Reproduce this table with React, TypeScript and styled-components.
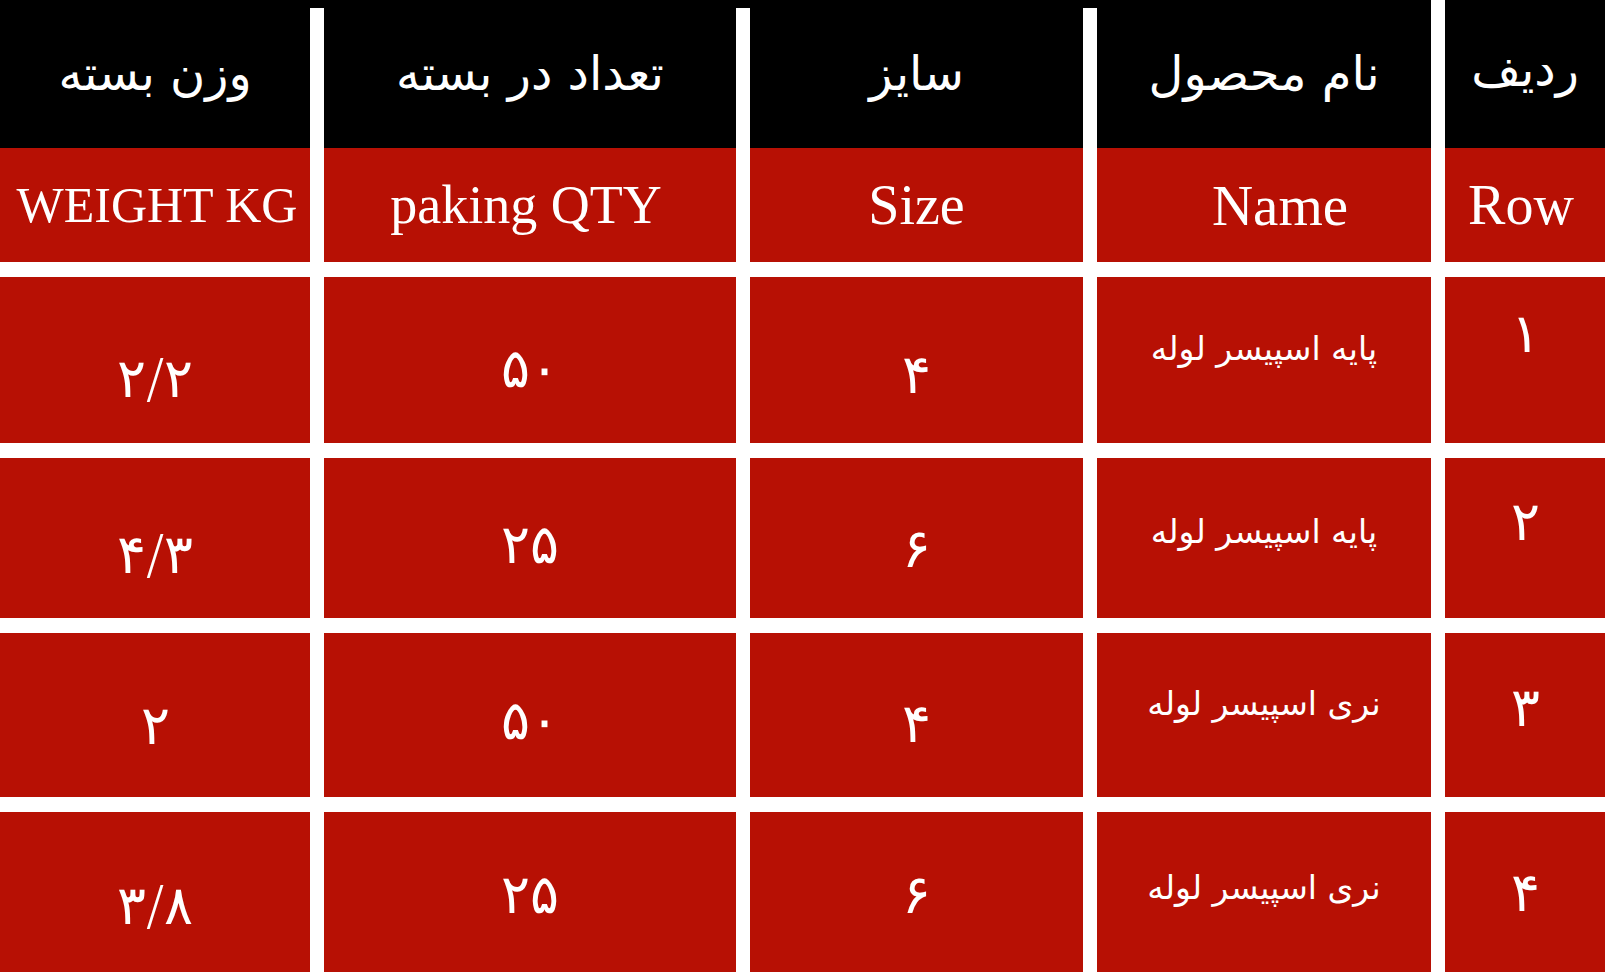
import React from "react";
import styled, { createGlobalStyle } from "styled-components";

const GlobalStyle = createGlobalStyle`
  html, body {
    margin: 0;
    padding: 0;
    background: #ffffff;
  }
  body {
    font-family: "Liberation Serif", "DejaVu Sans", serif;
  }
`;

const RED = "#b71004";

type Head = { fa: string; en: string; enSize: number; nudge: number };

// columns run right to left: Row, Name, Size, QTY, Weight
const heads: Head[] = [
  { fa: "ردیف", en: "Row", enSize: 56, nudge: -4 },
  { fa: "نام محصول", en: "Name", enSize: 57, nudge: 16 },
  { fa: "سایز", en: "Size", enSize: 56, nudge: 0 },
  { fa: "تعداد در بسته", en: "paking QTY", enSize: 54, nudge: -4 },
  { fa: "وزن بسته", en: "WEIGHT KG", enSize: 50, nudge: 2 },
];

type Cell = { text: string; shift: number };
type BodyRow = { height: number; cells: Cell[] };

const rows: BodyRow[] = [
  {
    height: 166,
    cells: [
      { text: "۱", shift: -27 },
      { text: "پایه اسپیسر لوله", shift: -12 },
      { text: "۴", shift: 14 },
      { text: "۵۰", shift: 8 },
      { text: "۲/۲", shift: 18 },
    ],
  },
  {
    height: 160,
    cells: [
      { text: "۲", shift: -17 },
      { text: "پایه اسپیسر لوله", shift: -7 },
      { text: "۶", shift: 10 },
      { text: "۲۵", shift: 6 },
      { text: "۴/۳", shift: 16 },
    ],
  },
  {
    height: 164,
    cells: [
      { text: "۳", shift: -8 },
      { text: "نری اسپیسر لوله", shift: -12 },
      { text: "۴", shift: 8 },
      { text: "۵۰", shift: 5 },
      { text: "۲", shift: 10 },
    ],
  },
  {
    height: 160,
    cells: [
      { text: "۴", shift: 0 },
      { text: "نری اسپیسر لوله", shift: -5 },
      { text: "۶", shift: 2 },
      { text: "۲۵", shift: 2 },
      { text: "۳/۸", shift: 13 },
    ],
  },
];

const Sheet = styled.div`
  direction: rtl;
  width: 1605px;
  display: flex;
  flex-direction: column;
  gap: 15px;
  background: #ffffff;
`;

const Columns = styled.div<{ $rows: string }>`
  display: grid;
  grid-template-columns: 160px 334px 333px 412px 310px;
  grid-template-rows: ${(p) => p.$rows};
  column-gap: 14px;
`;

const Cap = styled.div`
  grid-column: 2 / -1;
  grid-row: 1;
  background: #000000;
`;

const HeadCell = styled.div<{ $first: boolean }>`
  grid-row: ${(p) => (p.$first ? "1 / -1" : "2 / -1")};
  display: flex;
  flex-direction: column;
`;

const FaLabel = styled.div`
  flex: 1;
  background: #000000;
  color: #ffffff;
  display: flex;
  align-items: center;
  justify-content: center;
  font-family: "DejaVu Sans", sans-serif;
  font-size: 48px;
  padding-bottom: 10px;
`;

const EnLabel = styled.div<{ $size: number; $nudge: number }>`
  height: 114px;
  background: ${RED};
  color: #ffffff;
  display: flex;
  align-items: center;
  justify-content: center;
  direction: ltr;
  font-family: "Liberation Serif", serif;
  font-size: ${(p) => p.$size}px;
  white-space: nowrap;
  padding-left: ${(p) => Math.max(p.$nudge, 0) * 2}px;
  padding-right: ${(p) => Math.max(-p.$nudge, 0) * 2}px;
`;

const BodyCell = styled.div`
  background: ${RED};
  color: #ffffff;
  display: flex;
  align-items: center;
  justify-content: center;
  font-family: "DejaVu Sans", sans-serif;
`;

const CellText = styled.span<{ $shift: number; $words: boolean }>`
  transform: translateY(${(p) => p.$shift}px);
  font-size: ${(p) => (p.$words ? 33 : 54)}px;
  font-weight: ${(p) => (p.$words ? 400 : 200)};
  white-space: nowrap;
`;

export default function App() {
  return (
    <>
      <GlobalStyle />
      <Sheet>
        <Columns $rows="8px 140px 114px">
          <Cap />
          {heads.map((h, i) => (
            <HeadCell key={h.en} $first={i === 0}>
              <FaLabel>{h.fa}</FaLabel>
              <EnLabel $size={h.enSize} $nudge={h.nudge}>
                {h.en}
              </EnLabel>
            </HeadCell>
          ))}
        </Columns>
        {rows.map((r, ri) => (
          <Columns key={ri} $rows={`${r.height}px`}>
            {r.cells.map((c, ci) => (
              <BodyCell key={ci}>
                <CellText $shift={c.shift} $words={ci === 1}>
                  {c.text}
                </CellText>
              </BodyCell>
            ))}
          </Columns>
        ))}
      </Sheet>
    </>
  );
}
